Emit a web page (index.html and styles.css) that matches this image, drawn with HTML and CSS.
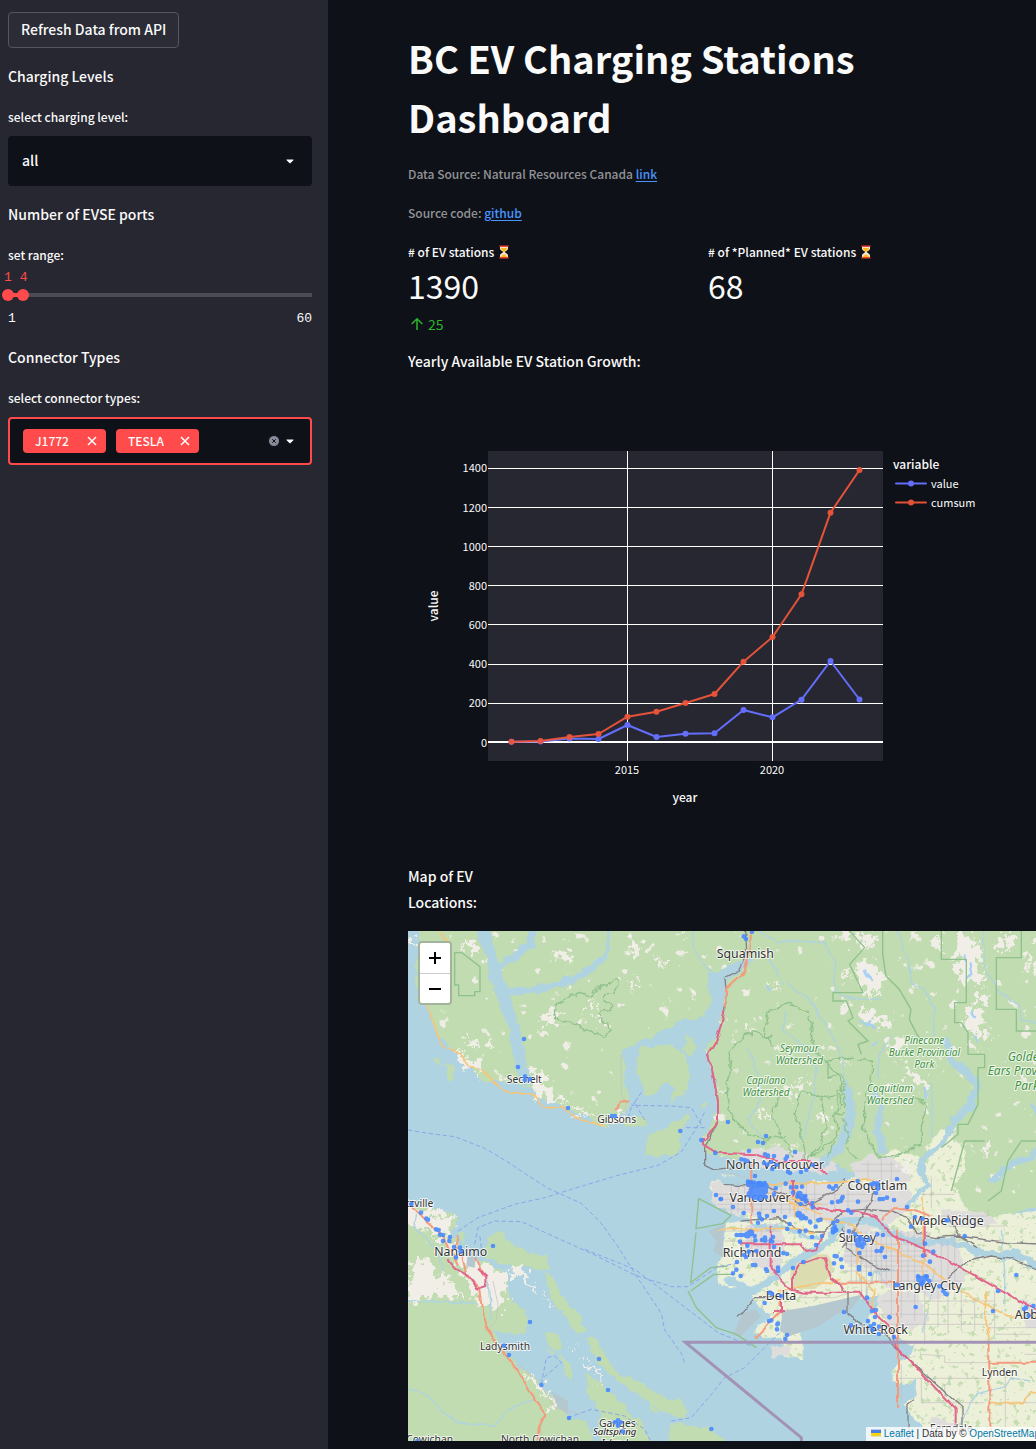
FILE: index.html
```html
<!DOCTYPE html>
<html lang="en">
<head>
<meta charset="utf-8">
<meta name="viewport" content="width=device-width, initial-scale=1">
<title>BC EV Charging Stations Dashboard</title>
<link rel="stylesheet" href="styles.css">
</head>
<body>
<div class="app">
  <aside class="sidebar">
    <button class="refresh" type="button">Refresh Data from API</button>

    <p class="text">Charging Levels</p>
    <div class="field">
      <label class="label" for="level">select charging level:</label>
      <div class="select-wrap">
        <select class="select" id="level"><option>all</option></select>
        <svg class="caret" viewBox="0 0 8 5" aria-hidden="true"><path d="M.6.6h6.8q.4.3 0 .7L4.4 4.2q-.4.3-.8 0L.6 1.3q-.4-.4 0-.7z"/></svg>
      </div>
    </div>

    <p class="text">Number of EVSE ports</p>
    <div class="field slider-field">
      <label class="label" for="ports-min">set range:</label>
      <div class="slider">
        <div class="slider-values"><output for="ports-min">1</output><output for="ports-max">4</output></div>
        <div class="slider-track">
          <input class="range" id="ports-min" type="range" min="1" max="60" value="1">
          <input class="range" id="ports-max" type="range" min="1" max="60" value="4" aria-label="maximum ports">
        </div>
        <div class="slider-ticks"><span>1</span><span>60</span></div>
      </div>
    </div>

    <p class="text">Connector Types</p>
    <div class="field">
      <label class="label" for="connectors">select connector types:</label>
      <div class="multi">
        <span class="tag">J1772<button class="tag-x" type="button" aria-label="Remove J1772"><svg viewBox="0 0 10 10"><path d="M1 1l8 8M9 1l-8 8"/></svg></button></span>
        <span class="tag">TESLA<button class="tag-x" type="button" aria-label="Remove TESLA"><svg viewBox="0 0 10 10"><path d="M1 1l8 8M9 1l-8 8"/></svg></button></span>
        <input class="multi-input" id="connectors" type="text">
        <button class="clear" type="button" aria-label="Clear all"><svg viewBox="0 0 12 12"><circle cx="6" cy="6" r="5.5"/><path d="M4.2 4.2l3.6 3.6M7.8 4.2L4.2 7.8"/></svg></button>
        <svg class="caret" viewBox="0 0 8 5" aria-hidden="true"><path d="M.6.6h6.8q.4.3 0 .7L4.4 4.2q-.4.3-.8 0L.6 1.3q-.4-.4 0-.7z"/></svg>
      </div>
    </div>
  </aside>

  <main class="main">
    <h1 class="title">BC EV Charging Stations Dashboard</h1>
    <p class="caption">Data Source: Natural Resources Canada <a href="#source">link</a></p>
    <p class="caption">Source code: <a href="#code">github</a></p>

    <div class="metrics">
      <section>
        <h2 class="metric-label"># of EV stations
          <svg class="glass" viewBox="0 0 10 14" aria-hidden="true"><path fill="#f4e3d0" d="M1 2h8v1.500C9 5.500 6 6 6 7s3 1.500 3 3.500V12H1v-1.500C1 8.500 4 8 4 7S1 5.500 1 3.500z"/><path fill="#fdb813" d="M2 3h6c0 2-2 2.500-2.500 4h-1C4 5.500 2 5 2 3zM2 12c.5-2 2.500-1.500 3-3 .5 1.500 2.500 1 3 3z"/><path fill="#e8432d" d="M.5.5h9V2h-9zM.5 12h9v1.500h-9z"/></svg></h2>
        <div class="metric-value">1390</div>
        <div class="metric-delta"><svg class="arrow" viewBox="0 0 12 12" aria-hidden="true"><path d="M6 12V1M.7 6L6 .8 11.300 6"/></svg>25</div>
      </section>
      <section>
        <h2 class="metric-label"># of *Planned* EV stations
          <svg class="glass" viewBox="0 0 10 14" aria-hidden="true"><path fill="#f4e3d0" d="M1 2h8v1.500C9 5.500 6 6 6 7s3 1.500 3 3.500V12H1v-1.500C1 8.500 4 8 4 7S1 5.500 1 3.500z"/><path fill="#fdb813" d="M2 3h6c0 2-2 2.500-2.500 4h-1C4 5.500 2 5 2 3zM2 12c.5-2 2.500-1.500 3-3 .5 1.500 2.500 1 3 3z"/><path fill="#e8432d" d="M.5.5h9V2h-9zM.5 12h9v1.500h-9z"/></svg></h2>
        <div class="metric-value">68</div>
      </section>
    </div>

    <p class="text">Yearly Available EV Station Growth:</p>

    <svg class="chart" viewBox="0 0 584 450" role="img" aria-label="Yearly station growth">
      <rect class="plot" x="80" y="60" width="395" height="310"/>
      <path class="grid" d="M80 77.500H475M80 116.500H475M80 155.500H475M80 194.500H475M80 233.500H475M80 273.500H475M80 312.500H475M219.500 60V370M364.500 60V370"/>
      <path class="zero" d="M80 351H475"/>
      <g class="s-value">
        <polyline points="103.500,350.700 132.500,350.500 161.500,347.500 190.500,348 219.500,334 248.500,346 277.500,342.700 306.500,342.300 335.500,319 364.500,326.300 393.500,308.700 422.500,270 451.500,308.500"/>
        <path class="pts" d="M103.500 350.700h0M132.500 350.500h0M161.500 347.500h0M190.500 348h0M219.500 334h0M248.500 346h0M277.500 342.700h0M306.500 342.300h0M335.500 319h0M364.500 326.300h0M393.500 308.700h0M422.500 270h0M451.500 308.500h0"/>
        <path d="M488 92.500h30"/><path class="pts" d="M503 92.500h0"/>
      </g>
      <g class="s-cumsum">
        <polyline points="103.500,350.700 132.500,350 161.500,346 190.500,343 219.500,325.700 248.500,320.700 277.500,312 306.500,303 335.500,270.700 364.500,246 393.500,203.300 422.500,121.700 451.500,79"/>
        <path class="pts" d="M103.500 350.700h0M132.500 350h0M161.500 346h0M190.500 343h0M219.500 325.700h0M248.500 320.700h0M277.500 312h0M306.500 303h0M335.500 270.700h0M364.500 246h0M393.500 203.300h0M422.500 121.700h0M451.500 79h0"/>
        <path d="M488 111.500h30"/><path class="pts" d="M503 111.500h0"/>
      </g>
      <g class="tick end">
        <text x="79" y="81">1400</text><text x="79" y="121">1200</text><text x="79" y="160">1000</text><text x="79" y="199">800</text>
        <text x="79" y="238">600</text><text x="79" y="277">400</text><text x="79" y="316">200</text><text x="79" y="356">0</text>
      </g>
      <g class="tick mid"><text x="219" y="383">2015</text><text x="364" y="383">2020</text></g>
      <g class="tick"><text x="523" y="97">value</text><text x="523" y="116">cumsum</text></g>
      <text class="axis mid" x="277" y="411">year</text>
      <text class="axis mid" transform="translate(30 215) rotate(-90)">value</text>
      <text class="axis" x="485" y="78">variable</text>
    </svg>

    <p class="text map-title">Map of EV Locations:</p>

    <div class="map">
      <svg class="map-canvas" viewBox="0 0 2100 1530" preserveAspectRatio="xMinYMin slice" role="img" aria-label="Map of charging stations">
        <defs>
          <filter id="rough" color-interpolation-filters="sRGB">
            <feTurbulence type="fractalNoise" baseFrequency=".035" numOctaves="3" seed="4"/>
            <feDisplacementMap in="SourceGraphic" scale="26" xChannelSelector="R" yChannelSelector="G"/>
          </filter>
          <filter id="ragged" color-interpolation-filters="sRGB">
            <feTurbulence type="fractalNoise" baseFrequency=".04" numOctaves="4" seed="9"/>
            <feDisplacementMap in="SourceGraphic" scale="85" xChannelSelector="R" yChannelSelector="G"/>
          </filter>
          <filter id="wobble" color-interpolation-filters="sRGB">
            <feTurbulence type="fractalNoise" baseFrequency=".025" numOctaves="2" seed="2"/>
            <feDisplacementMap in="SourceGraphic" scale="16" xChannelSelector="R" yChannelSelector="G"/>
          </filter>
          <filter id="woods" color-interpolation-filters="sRGB">
            <feTurbulence type="fractalNoise" baseFrequency=".035" numOctaves="3" seed="4"/>
            <feDisplacementMap in="SourceGraphic" scale="26" xChannelSelector="R" yChannelSelector="G" result="land"/>
            <feTurbulence type="fractalNoise" baseFrequency=".024" numOctaves="4" seed="21"/>
            <feColorMatrix values="0 0 0 0 .94  0 0 0 0 .93  0 0 0 0 .9  14 0 0 0 -9.8"/>
            <feComposite in2="land" operator="in" result="speck"/>
            <feMerge><feMergeNode in="land"/><feMergeNode in="speck"/></feMerge>
          </filter>
          <filter id="fields" color-interpolation-filters="sRGB">
            <feTurbulence type="fractalNoise" baseFrequency=".035" numOctaves="3" seed="4"/>
            <feDisplacementMap in="SourceGraphic" scale="20" xChannelSelector="R" yChannelSelector="G" result="land"/>
            <feTurbulence type="fractalNoise" baseFrequency=".06" numOctaves="3" seed="7"/>
            <feColorMatrix values="0 0 0 0 .78  0 0 0 0 .87  0 0 0 0 .71  12 0 0 0 -7.3"/>
            <feComposite in2="land" operator="in" result="speck"/>
            <feMerge><feMergeNode in="land"/><feMergeNode in="speck"/></feMerge>
          </filter>
        </defs>
        <rect class="water" width="2100" height="1530"/>

        <!-- mainland -->
        <path class="forest" filter="url(#woods)" d="M20-30l18 72-18 70 10 90 32 20 13 50 17 45 43 35 25 30 30 10 10 35 35 25 55-2 55 17 30 5 15 30 40 10 50 25 60 20 30 25 30 10 30-25 35-40-5-45-20-30 15-40-15-55 60-25 65-35 65-30 55-10 25-45-10-80 60-25 49-20 30-5-25 25-30 25-25 10-7 75-30 100-30 40 15 50 15 60 3 70-23 60-20 30 5 30 15 15 120 20 60 20 110 10 100-25 80 60H2140V-30z"/>
        <path class="farm" filter="url(#fields)" d="M904 772l20 40 30 30 60 15-60 20-6 90-24 30 10 60 30 15 60 0 25 50 40 35-50 40 30 25 50-5 5 60 60 5 0-60-25-50 45-30 60-15 110-30 60 5-30 25-20 30 5 30 35 25 60 15 35 20-10 20-25 20-30 30 0 30 40 10 30-10 5 50-45 20 20 30 50 50 60 80H2140V850l-220-20-80 20-60-5-80-10-60-60-110-100-80-20-60 60-80 40-160-10-120 5-80-20-30 5z"/>
        <path class="forest" filter="url(#woods)" d="M1700 690l170-60 270 10v200l-256-10-60 15-70 10-70-15-54-60-90-30z"/>
        <path class="farm" filter="url(#fields)" d="M1555 650l45-60 30 20 35 40 10 70-60 60-50-30zM1480 740l100-15 60 40 30 60-100 10-70-30z"/>
        <path class="urban" filter="url(#rough)" d="M910 755l90-5 300 10 200 0 10 60-60 60-120 30-50-30-90-20-60 0-160-10-60-40zM990 660l120-10 160 40 20 30-60 10-160-10-80-30zM1010 882l110 0 10 90-20 60-70-30-30-50zM1310 900l250 0 30 80 0 90-160 0-40-60-90-20zM1330 700l60-30 90 20 30 60-100 10-70-20zM1440 1080l80 0 40 80-50 40-70-20-40-70zM1560 920l90 0 20 130-90 60-60-40zM1600 835l130 10 40 30-90 15-80-20zM1840 1110l110 10 0 60-100 10zM1090 1245l60 0 0 30-60 5zM1570 1460l70 20 0 40-70 0zM60 850l70 5 20 30-60 10z"/>
        <path class="sand" d="M1150 1000l20-18 50-12h38l16 26-4 38-50 40h-40l-26-12-8-20z"/>
        <g class="forest" filter="url(#rough)">
          <path d="M690 367l10-20 70-5 60 20 12 60-7 60-45 30 10-40-20-20-20 10-20 30-30 10-10-40-15-40zM835 310l25 10 0 45-18 12-12-25zM710 672l12-55 60-35 60-40 5 20-30 40 8 50-40 24zM640 577l30-20 42 0 5 20-40 12zM75 387l20-5 6 22zM110 392l25 8 6 47-20 4zM885 520l10-4 0 18-10 2z"/>
          <path d="M235 917l50-15 5 25 70 35 55 15 5 40-50-5-80-10-55-25zM405 1022l35 25 30 70 40 30 20 60-20 5-40-55-40-60zM540 1217l30 10 50 90 80 40 60 40 60 10 20 40-10 20-90-40-140-100-55-60zM410 1207l40 5 15 35-25 20-20-20zM455 1267l35 40 0 40-25-20zM535 1332l45 25 60 60 60 60 45 80H580l-10-70 10-40-35-40zM150 900l20 5 0 40-20-15zM720 1412l25 25-10 5zM780 1480l60 0 80 20 40 50H790z"/>
        </g>
        <path class="forest" filter="url(#rough)" d="M-40 812l100 20 70 15 25 20-25 30 20 50 30 30 45 10 30 20 45 25 5 35 5 40 35 30 15 35-10 35-60 0-40-10 40 50 40 60 50 30 20 30 40 30 35 40 5 25 50 5 20 40 5 60H-40z"/>
        <g class="bare" filter="url(#ragged)">
          <path d="M-10 825l70 15 75 15-5 30-20 35 40 40 60 30 55 30 30 20 0 60-35 40-50-20-20-60-60-90-60-60L30 890l-40-16zM0 1000l40-20 30 30 50 30 40 60-50 5-50-20-50 50zM310 1010l30 5 50 60-15 5-40-40-30-12zM400 1092l35 35-10 3zM490 1230l18 16-5 5zM520 1285l75 60-10 5-60-50zM340 1310l60 50 40 60-15 5-40-60z"/>
          <path d="M170 30l40 0 0 40-15-5-5-20zM435 70l25 5 15-15 20 20-30 15-20-8zM655 35l30-5 20 30-15 10zM740 60l20 25 30 0-5 20-25-10zM670 140l15 20-5 30-10-15zM790 205l12 15-10 12zM410 250l35-20 30 10-30 20-20 20-20 10zM540 220l25-10-5 40-20 5zM570 260l20 0 0 20-20 5zM820 0l15 20-15 0zM230 320l25 10 5 30-15-5zM170 320l40 20-10 12-20-12zM135 355l50 30 20 15 10 30-25-15-20-15-25-20zM0 10l20 0 10 30-25 5zM365 420l40 5 0 30 30 30 40 30-50-5-40-10-10-40zM480 525l60 20 50 25-60-20-60-20zM600 560l60-15 0 15-50 20z"/>
          <path d="M1300 0l30 10 0 30-30-15zM1350 10l50 0 15 30-40 10zM1350 80l50 20 30 40-30 40-40-20-20-40zM1350 235l40 10 60 20 0 20-50-5-40-15zM1390 190l30-10-10 20zM1290 200l30 10-20 20zM1645 10l50 0 20 60 10 80-40 10-40-20 0-80zM1760 15l60 0-25 50-30-20zM1670 240l40-15 20 50-40 40-20-35zM1705 175l35 10 0 40-30-10zM1720 300l40 5-30 40zM1440 340l30-25 20 20-20 25zM1475 405l45 20 45 30 0 20-50-20zM1160 455l40-10-20 40-20-10zM1080 160l30 0-10 20zM1020 285l30 10-20 10zM1090 340l20 10-10 20zM1050 535l30 20-20 15zM1230 545l40 10-20 20zM1850 60l30 50-10 20-20-30zM1880 0l30 20-20 30zM1300 110l30 20-20 10zM1570 15l25 5 10 40-20 0zM1720 640l25 0-10 40zM1480 690l20-10 10 50-20 0z"/>
        </g>
        <path class="flat" d="M1125 1140l90-15 150-35-40 50-40 10-50 35-90 30-30-15zM900 900l50-20-5 50 0 50-30-20 10-30zM1000 1150l40-15 20 20-60 60-25 0zM180 960l25 10-5 40-25-5zM430 1380l50 30 0 40-30-20z"/>

        <!-- inlets, rivers, lakes -->
        <g class="river" filter="url(#rough)">
          <path stroke-width="34" d="M225-30l0 30 20 60 20 80 25 70 25 70 10 50 10 60 20 55"/>
          <path stroke-width="22" d="M260 110l60-30 45-40 10-65M285 185l90-8 80-18 70-30 60-45"/>
          <path stroke-width="10" d="M585 84l15-30 4-80M1312 450l20 50 5 50-20 50-20 50-40 50"/>
          <path stroke-width="28" d="M1320 480l10 60-15 60-20 50-50 45"/>
          <path stroke-width="24" d="M900 700l100 8 90 20 130 10 80-5M910 735l60 15 140 5 90-8"/>
          <path stroke-width="26" d="M1620 350l12 40 50 40 25 30-20 60-35 40"/>
          <path stroke-width="16" d="M1620 350l-3-20M1640 560l-20 60-80 70 0 30 20 40-60 60"/>
          <path stroke-width="11" d="M935 855l80 15 60 20 60 0 60 30 40 0"/>
          <path stroke-width="22" d="M960 1050l80 30 60-40 60-50 60-30 40-30 50-60 80 0 90 50 60 15 90-5 90 35 60 10 50-5 120 75"/>
          <path stroke-width="18" d="M1400 485l20 45-15 70 15 30 5 30M1750 750l60-50 60-20 40-50"/>
        </g>
        <g class="river" filter="url(#wobble)">
          <path stroke-width="4" d="M860-20l-5 70 20 40 40 40M1050 0l60 35 60-5 80 5 30 60 0 90 60 20 80 0M1080 80l45 80M1140 160l60 40 60 90 40 80 10 80M1460-20l40 100 15 80 30 10 35 60 0 80M1725-20l10 140 40 60 60 50 10 40 60 10M1450 320l-40 60 0 60M1020 350l30 80 10 80-40 50 40 60 0 30M1130 240l-5 60 60 40 40 70-10 90-30 130M1570 460l5 100-5 60M0 1110l200 6M-10 1365l70 30 80 80 120 10 40-50 80-30M1640 1520l30-70 40-60 80-20 20-30 50 10M240 1050l5 60 0 50M20 850l-5 30 60 60 30 80M1400 980l30 80M1370 1100l30-80 60 0M1580 1010l-10 60 0 40M1540 1200l20-60M1780 900l10 120 0 100"/>
          <path class="lake" d="M1368 120l10 20M1380 130l10 20M1360 270l20 10 10-10M1390 280l10 10M1395 340l10-8M1670 70l0 20M1685 100l5 30-10 10M1075 165l10 8M1690 245l8 10M1700 320l6 10M1870 520l20 40M1550 470l4 30"/>
        </g>

        <!-- park outlines -->
        <path class="park" d="M140 65h22l54 42v75h-16v12h-48v-32h-12zM1424-20v90l10 65 40 40 35 60-5 30 20 40 20 30M1600-20v105h75v130h-35v60h20l20 30v65h50v40h-20v110l-30 60-30 0v30l-50 40M1840-20v100h-75v155h60v65h135M1900 630h-60l-40 60-20 90-40 30M1730 630h-60l-40 150M1325-20l0 20 45 50-45 50 40 85h-90v25h40l20 50-15 10 60 60-30 10 10 30M872 803l-8 90 80-15 25-25zM864 905l-16 150 60-45 50-5M848 1080l70-50 60 0M840 1080l25 50 60 60 60 20 60 40"/>
        <g class="park" filter="url(#rough)">
          <path d="M446 220l30-15 20-20 30 10 30 0 0-15 20-15 20 0 15-20 20-2-2 20-15 25-25 0 0 20 30 15-5 15-40 5 5 25 20 10 10 20-25 20-20-15-30 0-20-20-40-8-35-10z"/>
          <path d="M1340 385h-80v50h50v40h-20v70h20M1090 340l-20-40 10-60 60-20 60 20 10 60 10 60 40 40 40 40 10 90M1090 320l-40-15-40 10-30 30-20 10 10 40-5 40-10 50 10 60 30 40 20 20 60 20 60-10M1180 480l70 20 50-10 0 40-20 20 10 60-50 50-50 30-10-90-20-50zM1235 500l20 90-20 60-50 50M1350 390l40 0 0 50-20 60 0 100 30 60 40 25 40-20 60-20 0-60 20-60-40-30M1110 500l-20 60 40 70 30 50M1290 600l-30 80M1310 560l10 100 30 20"/>
        </g>

        <!-- ferries -->
        <g class="ferry">
          <path d="M0 597l60 10 80 10 90 35 60 35 60 40 70 45 100 45 60 60 50 70 50 80 40 60 40 60 10 50 50 70 10 30"/>
          <path d="M150 900l60-40 110-40 90-20 80-25 140-42 120-30 70-40 50-80 20-40M890 590l-60 0M880 580l-30-50-60-5-120-2"/>
          <path d="M200 940l10-50 50-20 80 2 110 50 110 50 120 60 110 35 50 0 90-60 60-10M220 950l-5-40M530 955l150 60 120 90 130 100 100 40"/>
          <path d="M400 1360l15-80 25-5 20 20-60 50M480 1460l70-25 100 20 60 40 30 60M790 1470l60-10 60-70 40-50 60-30 60-60 50-50M660 560l10-30 20-30M700 484l-20 30 10 20 25 40"/>
        </g>

        <!-- streets and roads -->
        <g class="street">
          <path d="M930 790h310M940 805h300M950 835h280M970 760v90M990 757v90M1010 757v90M1035 757v90M1060 757v95M1090 757v90M1120 757v90M1145 757v90M1170 757v90M1195 757v90M1220 760v110M930 820h330M1310 960h250M1310 940h250M1310 975h250M1310 990h250M1300 1020h260M1320 1005h240M1330 900v160M1345 900v160M1360 900v190M1375 900v190M1390 900v160M1405 900v160M1420 900v160M1435 900v160M1450 900v250M1480 900v260M1500 900v200M1520 900v270M1320 1050h340M1600 920v150M1620 920v150M1640 900v200M1660 1080v120M1420 1110h340M1400 1150h350M1430 1180h320M1550 1080v160M1590 1080v110M1620 1080v130M1700 1100v100M1760 1080v130h110M1990 1190h-250M1600 855h140v-20M1600 885h200M1470 1342h260M1540 1415h190M1540 1270l70 5 0 20h135M1480 1300v110M1540 1342v70M1610 1360v40M1792 1320v180M1850 1270h120M1744 1415h200M940 900h180M950 930h170M1000 880v110M1030 885v100M1060 885v100M1170 1100h110l60-20M1570 740v90M1540 790h100M1340 720h140M1360 700h100M1380 690v60M1420 680v70M1450 690v60M1260 790h160M1280 810h140M1280 770v70M1320 760v80"/>
          <path d="M640 375v-5l0 120 15 30-10 40M255 1050l15 70-5 50-20 20M330 1300l60 50 50 80 80 20M930 720l90 20"/>
        </g>
        <g class="rail" filter="url(#wobble)">
          <path d="M950 140l5 40-5 60-25 90-25 40 15 60 15 80 0 60-40 80 0 50 30 15 60-5M1009-20l5 100-20 40-40 20M1000 870l110-10 60 40 80 0 60-60 60-5 70 5 60 20 30 50 50 10 70-5 150 20 120 5 50 5 120 80M1310 745l-20 30-60 30-40 20-30-20-80-35-130-10M1305 890l10 60 70 50 60 20M1320 1080v70l60 40 60 20 12 30 210 190 0 60M1500 1540v-120l20-15M1100 1100l-60 0-50 60M1620 1040l60-50 70-15 60 10 120 50 90-15M1400 750l-10 60-60 100-30 40M1620 850l30 60 60 40"/>
        </g>
        <g class="road-y" filter="url(#wobble)">
          <path d="M90-20l0 20 35 35 5 100-40 70-30 20 20 60 15 55 60 25 25 40 45 15 30 30 40 35 80 5 30 40 60 0 40 30 80 25M1240 865l80 10 60 50 120 50 60 30 60 50 80 50 100 50h140M1350 900v130l50 50-10 70M1735 1080v100l10 30v50M1040 770l200 80M1545 800v240M1744 1415h100l20-30h120M930 895h230l60 10M1110 1080l110-20 80-15M1030 760l250-5 120-10M1160 760v100M1100 790l140 30"/>
        </g>
        <g class="road-o" filter="url(#wobble)">
          <path d="M-10 810l50 50 60 50 35 60 15 30M150 915l-8 30 20 30 15 60 40 40 10 80 15 45 40 60 40 50 40 70 50 70-20 40-5 80M205 980l20 50M660 508l-25 5-10 25M950 230l5-60 55-50 15-60 0-80M1470 900v530M1295 1055h180M1744 1230v310M1744 1295h240M1030 690v190M1115 1085v40M1120 1140l-80 80M1424 865l30-30 60 0 50 20"/>
        </g>
        <g class="road-r" filter="url(#wobble)">
          <path d="M885 620l0 20 40 25 120 5 60 20 100 0 50 40M120 985l20 25 40 20 25 45 30-10 0-30-25-25M950 240l-25 90-25 40 15 60 15 80 0 60-40 60M1000 940h180l15 20 30-5 25-50M1088 885v130l60 60 40 10h170l60 80 35 30 10 50 180 190 0 60M1155 1080v-45l20-35 50-18h22l20 58 30 20 10 20M1165 790l60 40 60 10 50 0 70 15 20 30 30 30 120 50 110 60 140 80 120 65M1155 747v50M1550 865v110M1119 1145v-50M1098 1140h30"/>
        </g>
        <path class="frontier" d="M1180 1540v-20L832 1234H2100"/>

        <g class="name city">
          <text x="1012" y="80">Squamish</text><text x="1101" y="713">North Vancouver</text><text x="1056" y="812">Vancouver</text>
          <text x="1032" y="977">Richmond</text><text x="1348" y="933">Surrey</text><text x="1408" y="776">Coquitlam</text>
          <text x="1619" y="883">Maple Ridge</text><text x="1557" y="1077">Langley City</text><text x="1119" y="1107">Delta</text>
          <text x="1403" y="1210">White Rock</text><text x="158" y="976">Nanaimo</text><text x="1918" y="1164">Abbotsford</text>
        </g>
        <g class="name town">
          <text x="349" y="457">Sechelt</text><text x="626" y="577">Gibsons</text><text x="8" y="829">Lantzville</text><text x="291" y="1257">Ladysmith</text>
          <text x="628" y="1488">Ganges</text><text x="396" y="1537">North Cowichan</text><text x="65" y="1535">Cowichan</text>
          <text x="1775" y="1336">Lynden</text><text x="1630" y="1502">Ferndale</text>
          <text class="isle" x="620" y="1513">Saltspring</text><text class="isle" x="620" y="1545">Island</text>
        </g>
        <g class="name nature">
          <text x="1174" y="362">Seymour</text><text x="1174" y="398">Watershed</text>
          <text x="1074" y="460">Capilano</text><text x="1074" y="496">Watershed</text>
          <text x="1446" y="483">Coquitlam</text><text x="1446" y="519">Watershed</text>
          <text x="1549" y="338">Pinecone</text><text x="1549" y="375">Burke Provincial</text><text x="1549" y="411">Park</text>
          <g class="big"><text x="1856" y="390">Golden</text><text x="1856" y="433">Ears Provincial</text><text x="1856" y="476">Park</text></g>
        </g>

        <!-- stations -->
        <g class="stations">
          <path d="M348 324h0M330 408h0M351 436h0M351 447h0M366 444h0M480 531h0M612 555h0M621 555h0M817 600h0M880 627h0M922 666h0M1007 16h0M1014 24h0M1032 2h0M960 573h0"/>
          <path d="M10 819h0M39 845h0M55 863h0M60 866h0M84 895h0M92 897h0M96 911h0M105 912h0M105 930h0M126 918h0M124 930h0M138 948h0M156 950h0M158 962h0M144 979h0M255 945h0M366 1173h0M288 1244h0M303 1272h0M573 1284h0M400 1362h0M600 1377h0M483 1461h0M620 1474h0M630 1468h0M638 1474h0M630 1484h0M645 1502h0M910 1494h0M28 1530h0M924 792h0M939 804h0"/>
          <path d="M1074 615h0M1050 633h0M1065 636h0M1023 660h0M1071 670h0M1080 674h0M1098 675h0M1137 677h0M1133 684h0M1161 663h0M1000 685h0M1010 687h0M1018 690h0M1068 696h0M1078 701h0M1093 714h0M1105 702h0M1140 722h0M1146 726h0M1179 723h0M1195 717h0M1215 702h0M1041 735h0M1020 752h0M1030 754h0M1038 755h0M1050 757h0M1058 760h0M1070 756h0M1349 750h0M1408 757h0M1467 744h0M1133 758h0M1149 769h0M1090 693h0"/>
          <path class="dense" d="M1024 758h0M1036 764h0M1050 770h0M1032 778h0M1046 786h0M1060 774h0M1070 780h0M1064 790h0M1054 800h0M1040 796h0M1026 790h0M1072 766h0M1056 760h0M1174 790h0M1184 800h0M1172 850h0M1182 858h0M1028 905h0M1018 912h0M1350 930h0M1352 940h0M1278 896h0M1535 1044h0M1552 1040h0M1542 1052h0"/>
          <path d="M938 804h0M975 828h0M1007 846h0M1074 798h0M1103 772h0M1098 790h0M1053 848h0M1055 858h0M1062 865h0M1050 875h0M1077 855h0M1098 840h0M1131 858h0M1145 879h0M1138 894h0M1175 901h0M1193 899h0M1207 874h0M1223 887h0M1231 868h0M1238 866h0M1206 872h0M1194 862h0M1165 768h0M1155 785h0M1168 797h0M1182 767h0M1192 795h0M1193 812h0M1178 819h0M1213 816h0M1214 829h0M1195 808h0M1264 767h0M1275 773h0M1284 765h0M1272 814h0M1290 812h0M1298 810h0M1302 802h0M1304 798h0M1320 838h0M1330 845h0M1350 812h0M1329 844h0M1276 875h0M1288 870h0M1280 887h0M1275 904h0M1285 897h0M1323 901h0M1342 910h0M1355 918h0M1365 925h0M1368 938h0M1363 948h0M1354 966h0M1382 926h0M1408 910h0M1425 912h0M1422 952h0M1406 960h0M1418 960h0M1431 978h0M1280 975h0M1286 976h0M1299 985h0M1278 997h0M1302 1008h0M1353 1008h0M1353 1015h0M1386 1029h0"/>
          <path d="M986 912h0M996 912h0M1004 912h0M1040 915h0M1042 928h0M1062 927h0M1071 920h0M1072 929h0M1088 929h0M1095 918h0M1093 932h0M1098 948h0M996 932h0M1018 944h0M1022 962h0M1008 972h0M1014 978h0M1045 960h0M1126 966h0M1137 969h0M987 993h0M985 1016h0M975 1027h0M998 1035h0M1035 1002h0M1042 1002h0M1074 1015h0M1077 1020h0M1110 1010h0M1110 1020h0M1155 1011h0M1186 993h0M1212 918h0M1242 915h0M1224 942h0M1085 1085h0M1092 1089h0M1119 1095h0M1070 1116h0M1083 1170h0M1090 1168h0M1108 1180h0M1107 1195h0M1137 1212h0M1132 1224h0M1110 1178h0"/>
          <path d="M1390 760h0M1398 757h0M1408 765h0M1410 773h0M1404 786h0M1415 804h0M1425 804h0M1437 800h0M1458 807h0M1497 828h0M1521 858h0M1544 863h0M1509 887h0M1616 868h0M1620 868h0M1670 915h0M1551 938h0M1576 962h0M1545 974h0M1566 992h0M1825 1032h0M1770 1080h0M1755 1140h0M1848 1134h0M1854 1130h0M1876 1125h0M1862 1154h0M1530 1036h0M1540 1060h0M1556 1036h0M1564 1050h0M1470 1062h0M1464 1062h0M1594 1066h0M1606 1080h0M1612 1088h0M1616 1090h0M1523 1128h0M1377 1100h0M1404 1137h0M1392 1140h0M1308 1143h0M1401 1158h0M1445 1159h0M1380 1170h0M1398 1179h0M1388 1186h0M1394 1197h0M1413 1187h0M1413 1209h0M1329 1183h0M1458 1218h0M1444 1158h0"/>
        </g>
      </svg>
      <div class="zoom">
        <button type="button" aria-label="Zoom in"><svg viewBox="0 0 14 14"><path d="M7 1v12M1 7h12"/></svg></button>
        <button type="button" aria-label="Zoom out"><svg viewBox="0 0 14 14"><path d="M1 7h12"/></svg></button>
      </div>
      <div class="attribution"><svg class="flag" viewBox="0 0 12 8" aria-hidden="true"><path fill="#4c7be1" d="M0 0h12v4H0z"/><path fill="#ffd500" d="M0 4h12v3H0z"/><path fill="#e0bc00" d="M0 7h12v1H0z"/></svg> <a href="#leaflet">Leaflet</a> | Data by © <a href="#osm">OpenStreetMap</a>, under <a href="#odbl">ODbL</a>.</div>
    </div>
  </main>
</div>
</body>
</html>
```
FILE: styles.css
```css
* { box-sizing: border-box; }

body {
  margin: 0;
  background: #0e1117;
  color: #fafafa;
  font-family: "Noto Sans CJK JP", "Noto Sans", sans-serif;
  font-size: 14px;
  font-weight: 500;
  line-height: 26px;
}

p, h1, h2 { margin: 0; }
button, input, select { font: inherit; color: inherit; margin: 0; }
svg { display: block; }

.app {
  display: grid;
  grid-template-columns: 328px minmax(0, 1fr);
  min-height: 100vh;
}

.sidebar {
  display: flex;
  flex-direction: column;
  gap: 16px;
  padding: 12px 16px 24px 8px;
  background: #262730;
}

.text { padding-bottom: 2px; line-height: 24px; }

.refresh {
  align-self: flex-start;
  height: 36px;
  padding: 0 12px 2px;
  border: 1px solid #555660;
  border-radius: 4px;
  background: #2b2c36;
  line-height: 24px;
}

.field { display: flex; flex-direction: column; gap: 8px; }
.label { font-size: 12px; line-height: 22px; }

.select-wrap { display: grid; align-items: center; }
.select-wrap > * { grid-area: 1 / 1; }
.select {
  appearance: none;
  width: 100%;
  height: 50px;
  padding: 0 40px 2px 14px;
  border: 0;
  border-radius: 4px;
  background: #0e1117;
}
.caret { width: 8px; height: 5px; fill: #fafafa; pointer-events: none; }
.select-wrap .caret { justify-self: end; margin-right: 18px; }

.slider-field { gap: 4px; }
.slider {
  display: flex;
  flex-direction: column;
  gap: 2px;
  padding-bottom: 2px;
  font-family: "Liberation Mono", monospace;
  font-size: 13px;
  font-weight: 400;
  line-height: 16px;
}
.slider-values { display: flex; gap: 8px; margin-left: -4px; color: #ff4b4b; }
.slider-track {
  position: relative;
  height: 14px;
  background:
    linear-gradient(#ff4b4b, #ff4b4b) 0 5px / 16px 4px no-repeat,
    linear-gradient(#4a4b56, #4a4b56) 0 5px / 100% 4px no-repeat;
}
.range {
  position: absolute;
  inset: 0 -6px;
  width: auto;
  min-width: calc(100% + 12px);
  height: 14px;
  appearance: none;
  background: none;
  pointer-events: none;
}
.range::-webkit-slider-thumb {
  appearance: none;
  width: 12px;
  height: 12px;
  border-radius: 50%;
  background: #ff4b4b;
  pointer-events: auto;
}
.slider-ticks { display: flex; justify-content: space-between; padding-top: 7px; }

.multi {
  display: flex;
  align-items: center;
  height: 48px;
  padding: 0 16px 0 13px;
  border: 2px solid #ff4b4b;
  border-radius: 4px;
  background: #0e1117;
}
.tag {
  display: flex;
  align-items: center;
  justify-content: space-between;
  width: 83px;
  height: 24px;
  margin-right: 10px;
  padding: 0 9px 0 12px;
  border-radius: 4px;
  background: #ff4b4b;
  font-size: 12px;
}
.tag-x, .clear { padding: 0; border: 0; background: none; }
.tag-x svg { width: 10px; height: 10px; fill: none; stroke: #fff; stroke-width: 1.5; }
.multi-input { flex: 1; min-width: 0; border: 0; outline: 0; background: none; }
.clear { margin-right: 6px; }
.clear svg { width: 12px; height: 12px; fill: #8b8c9b; stroke: #0e1117; stroke-width: 1; }

.main {
  display: flex;
  flex-direction: column;
  overflow: hidden;
  padding: 28px 44px 8px 80px;
}
.title { font-size: 38px; line-height: 59px; font-weight: 700; margin-bottom: 17px; }
.caption { margin-bottom: 17px; color: #929396; font-size: 12px; line-height: 22px; }
.caption a { color: #4a94ff; text-underline-offset: 2px; }

.metrics { display: grid; grid-template-columns: 1fr 1fr; gap: 16px; margin-bottom: 14px; }
.metric-label { display: flex; align-items: center; gap: 5px; font-size: 12px; font-weight: 500; line-height: 22px; }
.glass { width: 10px; height: 14px; }
.metric-value { padding-bottom: 6px; font-size: 32px; font-weight: 400; line-height: 44px; }
.metric-delta { display: flex; align-items: center; gap: 5px; padding-left: 3px; color: #2bb52b; font-weight: 400; line-height: 22px; }
.arrow { width: 12px; height: 12px; fill: none; stroke: currentColor; stroke-width: 1.5; }

.chart { width: 100%; height: auto; margin: 16px 0 22px; overflow: visible; fill: #fafafa; }
.plot { fill: #262730; }
.grid { stroke: #fff; stroke-width: 1; }
.zero { stroke: #fff; stroke-width: 2; }
.s-value, .s-cumsum { fill: none; stroke-width: 2; stroke-linecap: round; stroke-linejoin: round; }
.s-value { stroke: #636efa; }
.s-cumsum { stroke: #ef553b; opacity: .95; }
.pts { stroke-width: 6; }
.tick { font-size: 11px; font-weight: 400; }
.axis { font-size: 12px; }
.mid { text-anchor: middle; }
.end { text-anchor: end; }

.map-title { width: 96px; padding-bottom: 0; margin-bottom: 16px; line-height: 26px; }

.map { position: relative; width: calc(100% + 116px); height: 510px; overflow: hidden; font-weight: 400; }
.map-canvas { width: 100%; height: 100%; }
.water { fill: #afd3e1; }
.forest { fill: #c0dcb0; }
.farm { fill: #edf0d8; }
.urban { fill: #dedddc; }
.bare { fill: #f1eee8; }
.sand { fill: #dbddb0; }
.flat { fill: #b5c8d0; }
.river { fill: none; stroke: #afd3e1; stroke-linejoin: round; stroke-linecap: round; }
.lake { stroke: #a9d0f2; stroke-width: 7; }
.park { fill: none; stroke: #8fc18c; stroke-width: 4; stroke-linejoin: round; }
.ferry { fill: none; stroke: #8ba6ea; stroke-width: 3; stroke-dasharray: 13 8; }
.street, .rail, .road-y, .road-o, .road-r { fill: none; stroke-linejoin: round; }
.street { stroke: #c2bfc2; stroke-width: 2; }
.rail { stroke: #858184; stroke-width: 4; }
.road-y { stroke: #f8c577; stroke-width: 5; }
.road-o { stroke: #f39b7c; stroke-width: 6; }
.road-r { stroke: #e1668b; stroke-width: 6; }
.frontier { fill: none; stroke: #a292b5; stroke-width: 9; }
.name { font-family: "Noto Sans", sans-serif; text-anchor: middle; fill: #333; stroke: #fff; stroke-opacity: .75; stroke-width: 6; paint-order: stroke; stroke-linejoin: round; }
.city { font-size: 37px; }
.town { font-size: 31px; }
.isle { font-size: 29px; font-style: italic; fill: #111; }
.nature { font-size: 30px; font-style: italic; fill: #3f913d; }
.big { font-size: 36px; }
.stations { fill: none; stroke: #4588ff; stroke-opacity: .88; stroke-width: 14; stroke-linecap: round; }
.dense { stroke-width: 21; }

.zoom {
  position: absolute;
  top: 10px;
  left: 10px;
  border: 2px solid #a3b49c;
  border-radius: 4px;
  overflow: hidden;
}
.zoom button { display: grid; place-items: center; width: 30px; height: 30px; padding: 0; border: 0; background: #fff; }
.zoom button + button { border-top: 1px solid #ccc; }
.zoom svg { width: 14px; height: 14px; fill: none; stroke: #000; stroke-width: 2; }

.attribution {
  position: absolute;
  left: 458px;
  right: 0;
  bottom: 0;
  padding: 0 5px;
  background: rgba(255, 255, 255, .8);
  color: #333;
  font: 10px/14px "Liberation Sans", sans-serif;
  white-space: nowrap;
}
.attribution a { color: #0078a8; text-decoration: none; }
.flag { display: inline-block; width: 10px; height: 8px; }
```
